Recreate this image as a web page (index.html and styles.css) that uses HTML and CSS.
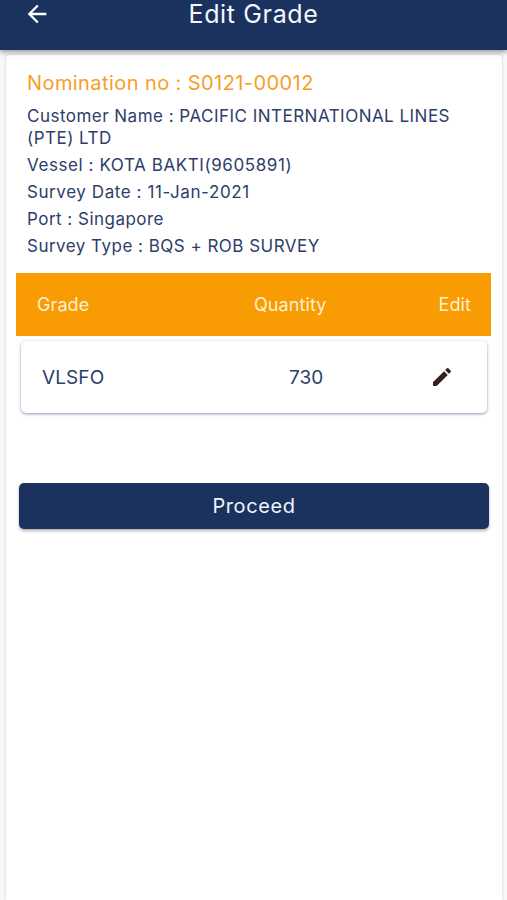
FILE: index.html
```html
<!DOCTYPE html>
<html lang="en">
<head>
<meta charset="utf-8">
<title>Edit Grade</title>
<link rel="stylesheet" href="styles.css">
</head>
<body>
<header class="bar">
<svg class="back" viewBox="0 0 24 24"><path d="M20 11H7.83l5.59-5.59L12 4l-8 8 8 8 1.41-1.41L7.83 13H20v-2z"/></svg>
<h1>Edit Grade</h1>
</header>
<main class="sheet">
<section class="info">
<h2>Nomination no : S0121-00012</h2>
<p>Customer Name : PACIFIC INTERNATIONAL LINES<br>(PTE) LTD</p>
<p class="wide">Vessel : KOTA BAKTI(9605891)</p>
<p class="wide">Survey Date : 11-Jan-2021</p>
<p>Port : Singapore</p>
<p>Survey Type : BQS + ROB SURVEY</p>
</section>
<div class="head"><span>Grade</span><span>Quantity</span><span>Edit</span></div>
<div class="row"><span>VLSFO</span><span>730</span>
<svg class="pencil" viewBox="0 0 24 24"><path d="M3 17.46v3.04c0 .28.22.5.5.5h3.04c.13 0 .26-.05.35-.15L17.81 9.94l-3.75-3.75L3.15 17.1c-.1.1-.15.22-.15.36zM20.71 7.04a1 1 0 0 0 0-1.41l-2.34-2.34a1 1 0 0 0-1.41 0l-1.83 1.83 3.75 3.75 1.83-1.83z"/></svg></div>
<button class="proceed">Proceed</button>
</main>
</body>
</html>
```
FILE: styles.css
```css
* { box-sizing: border-box; }
body { margin: 0; height: 900px; overflow: hidden; display: flex; flex-direction: column; background: #f8f8f9; font-family: Inter, "Liberation Sans", sans-serif; color: #2c3e69; }
.bar { height: 50px; flex: none; display: grid; grid-template-columns: 74px 1fr 74px; background: #1a325d; color: #f5f8ff; box-shadow: 0 2px 5px rgba(0,0,0,.4); z-index: 1; }
.back { width: 28px; height: 28px; margin-left: 23px; fill: #fff; }
h1 { margin: 0; font-size: 25px; line-height: 29px; font-weight: 400; letter-spacing: .65px; text-align: center; }
.sheet { flex: 1; margin: 5px 5px 0 6px; padding: 15px 10px 0; background: #fff; border-radius: 4px 4px 0 0; box-shadow: 0 0 3px rgba(0,0,0,.2); }
.info { height: 203px; padding-left: 11px; white-space: nowrap; }
h2 { margin: 0 0 9px; font-size: 20px; line-height: 26px; font-weight: 400; color: #f5a028; letter-spacing: .42px; }
p { margin: 0 0 5px; font-size: 17px; line-height: 22px; letter-spacing: .48px; }
.wide { letter-spacing: .58px; }
.head { height: 63px; margin-right: -1px; width: 475px; display: grid; grid-template-columns: 217px 1fr auto; align-items: center; padding: 0 20px 0 21px; background: #f99b02; color: #fff0d0; font-size: 18px; letter-spacing: .1px; }
.row { height: 72px; margin: 5px 5px 0; padding: 0 33px 0 21px; display: grid; grid-template-columns: 247px 1fr auto; align-items: center; border-radius: 5px; box-shadow: 0 1px 3px rgba(40,40,110,.5); font-size: 19px; letter-spacing: .1px; }
.pencil { width: 24px; height: 24px; fill: #35211f; }
.proceed { display: block; width: 470px; height: 46px; margin: 70px 0 0 3px; padding: 0; border: 0; border-radius: 5px; background: #1a325d; color: #eef4ff; font: 20px Inter, sans-serif; letter-spacing: .6px; box-shadow: 0 2px 3px rgba(0,0,0,.3); }
```
